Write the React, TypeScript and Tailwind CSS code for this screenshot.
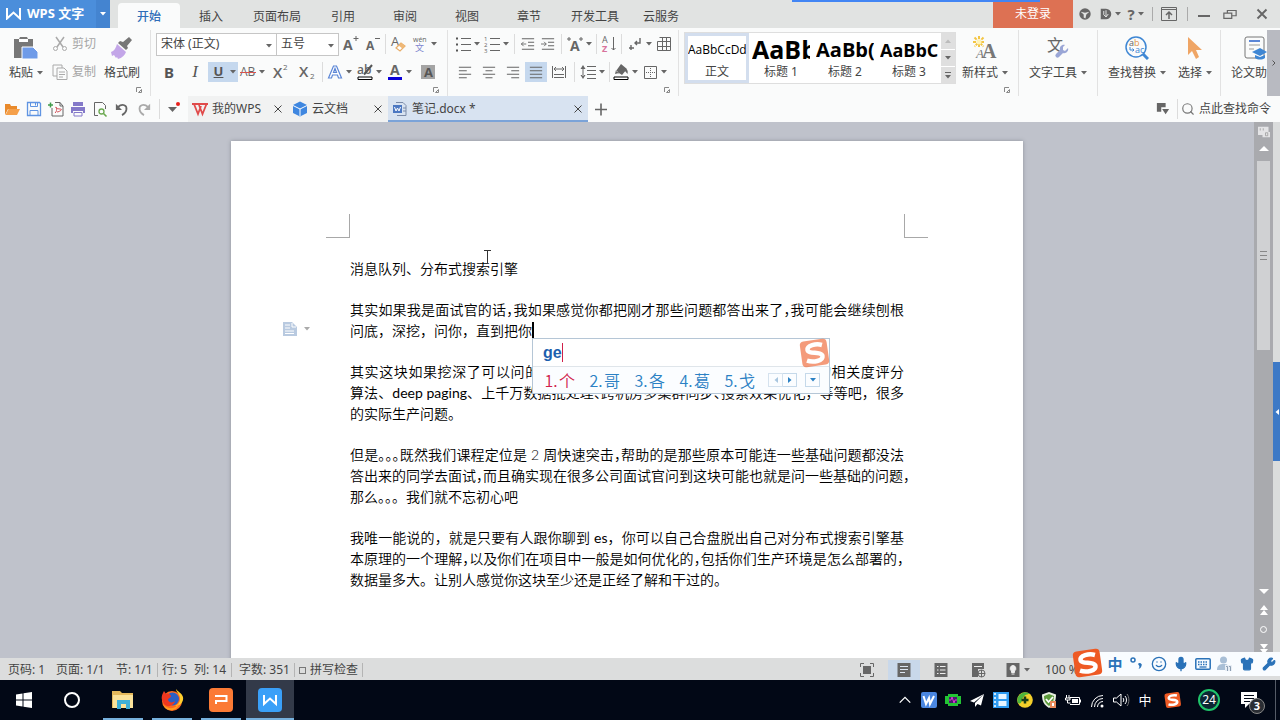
import type { ReactNode } from "react";
import clsx from "clsx";
import { Mic, Search, Shirt, Smile, Wrench } from "lucide-react";

const UI_FONT = "font-['Noto_Sans','Noto_Sans_CJK_SC',sans-serif]";
const GREY = "#666";

function Caret({ className = "text-[#666]" }: { className?: string }) {
  return (
    <svg viewBox="0 0 6 4" className={clsx("h-1 w-1.5 shrink-0", className)} aria-hidden="true">
      <path d="M0 0h6L3 3.5z" fill="currentColor" />
    </svg>
  );
}

function Sep({ className }: { className: string }) {
  return (
    <span className={clsx("flex shrink-0 justify-center", className)}>
      <span className="h-5 w-px bg-[#dcdcdc]" />
    </span>
  );
}

interface ToolProps {
  label: string;
  className: string;
  caret?: boolean;
  active?: boolean;
  children: ReactNode;
}

function Tool({ label, className, caret, active, children }: ToolProps) {
  return (
    <button
      aria-label={label}
      title={label}
      aria-pressed={active}
      className={clsx(
        "flex h-5 shrink-0 items-center justify-center gap-[3px]",
        className,
        active && "bg-[#c5d8ee]"
      )}
    >
      {children}
      {caret && <Caret />}
    </button>
  );
}

function Svg({ children, className = "size-4" }: { children: ReactNode; className?: string }) {
  return (
    <svg viewBox="0 0 16 16" fill="none" className={clsx("shrink-0 overflow-visible", className)} aria-hidden="true">
      {children}
    </svg>
  );
}

function Lines({ d, stroke = GREY, width = 1 }: { d: string; stroke?: string; width?: number }) {
  return <path d={d} stroke={stroke} strokeWidth={width} />;
}

function Glyph({
  x,
  y,
  size,
  fill = GREY,
  weight = 400,
  children,
}: {
  x: number;
  y: number;
  size: number;
  fill?: string;
  weight?: number;
  children: string;
}) {
  return (
    <text
      x={x}
      y={y}
      fontSize={size}
      fill={fill}
      fontWeight={weight}
      fontFamily="'Open Sans','Noto Sans CJK SC',sans-serif"
    >
      {children}
    </text>
  );
}

function Launcher({ label }: { label: string }) {
  return (
    <button aria-label={label} className="flex h-2 w-full items-center justify-end pr-2">
      <svg viewBox="0 0 6 6" className="size-1.5" fill="none" aria-hidden="true">
        <path d="M0.5 5V0.5H5M2.5 5.5h3v-3z" stroke="#888" />
      </svg>
    </button>
  );
}

function SogouLogo({ className }: { className: string }) {
  return (
    <svg viewBox="0 0 32 32" className={className} aria-hidden="true">
      <g transform="rotate(-8 16 16)">
        <rect x="2" y="3" width="27" height="26" rx="4" fill="#ee5a24" />
        <path
          d="M24 9C18 6.500 9 7.500 9 12s14 3 14 8-10 5.500-16 2.500"
          fill="none"
          stroke="#fff"
          strokeWidth="4.500"
        />
      </g>
    </svg>
  );
}

const MENU = ["开始", "插入", "页面布局", "引用", "审阅", "视图", "章节", "开发工具", "云服务"];

function TitleBar() {
  return (
    <header className="relative flex h-7 shrink-0 bg-[#e1e3e2] text-xs text-[#444]">
      <button className="flex w-24 items-center gap-1.5 bg-[#4b8edb] pl-1.5 text-[13px] font-bold text-white">
        <svg viewBox="0 0 15 12" className="h-3 w-[15px]" fill="none" aria-hidden="true">
          <path d="M1 0v10.500l6.500-6 6.500 6V0" stroke="#fff" strokeWidth="2" />
        </svg>
        WPS 文字
      </button>
      <button aria-label="应用菜单" className="flex w-3.5 items-center justify-center bg-[#4484d0]">
        <Caret className="text-white" />
      </button>
      <nav className="ml-2 flex pt-[3px]">
        {MENU.map((item, i) => (
          <button
            key={item}
            className={clsx(
              "min-w-[62px] px-[11px] pt-0.5",
              i === 0 && "rounded-t-sm bg-[#fafbfb] font-medium text-[#2f6db8]"
            )}
          >
            {item}
          </button>
        ))}
      </nav>
      <div className="ml-auto flex items-center">
        <button className="h-full w-20 bg-[#dd7153] text-white">未登录</button>
        <Tool label="皮肤" className="w-6">
          <Svg className="size-3.5">
            <circle cx="8" cy="8" r="6.500" fill={GREY} />
            <path d="M3 5.500l5 1 5-1-3.500 3-1 4.500-2-1 0-3.500z" fill="#e1e3e2" />
          </Svg>
        </Tool>
        <Tool label="云服务" className="w-[26px]" caret>
          <Svg className="size-3">
            <path d="M1 1h7a7 7 0 0 1 0 14H1z" fill={GREY} />
            <path d="M5 4v5l3 3 3-4M8 3v9" stroke="#e1e3e2" strokeWidth="1.300" />
          </Svg>
        </Tool>
        <Tool label="帮助" className="w-[25px]" caret>
          <span className="text-[15px] font-bold text-[#666]">?</span>
        </Tool>
        <span className="flex w-2 justify-center">
          <span className="h-3.5 w-px bg-[#aaa]" />
        </span>
        <Tool label="隐藏功能区" className="w-[26px]">
          <Svg>
            <path d="M0.5 1.500h15v13h-15zM0.5 3.500h15" stroke={GREY} />
            <path d="M8 13V6M5 9l3-3 3 3" stroke={GREY} strokeWidth="1.500" />
          </Svg>
        </Tool>
        <span className="flex w-2.5 justify-center">
          <span className="h-3.5 w-px bg-[#aaa]" />
        </span>
        <Tool label="最小化" className="w-6">
          <Svg>
            <Lines d="M2 10h12" width={2} />
          </Svg>
        </Tool>
        <Tool label="还原" className="w-7">
          <Svg className="size-3.5">
            <path d="M1 7h9v6H1zM5 7V4h10v6h-5" stroke={GREY} strokeWidth="1.400" />
          </Svg>
        </Tool>
        <Tool label="关闭" className="w-9">
          <Svg className="size-3">
            <Lines d="M2 2l12 12M14 2L2 14" width={2.5} />
          </Svg>
        </Tool>
      </div>
      <div className="absolute top-0 left-[792px] h-0.5 w-[248px] bg-[#4285f4]" />
    </header>
  );
}

function BigTool({
  label,
  className,
  caret = true,
  children,
}: {
  label: string;
  className: string;
  caret?: boolean;
  children: ReactNode;
}) {
  return (
    <button className={clsx("flex h-14 shrink-0 flex-col items-center pt-1", className)}>
      <span className="flex h-7 items-center">{children}</span>
      <span className="flex h-[22px] items-center gap-1 whitespace-nowrap">
        {label}
        {caret && <Caret />}
      </span>
    </button>
  );
}

function ClipboardGroup() {
  return (
    <section aria-label="剪贴板" className="w-[150px] shrink-0">
      <div className="flex">
        <BigTool label="粘贴" className="w-[52px]">
          <svg viewBox="0 0 24 24" className="size-6" aria-hidden="true">
            <path d="M0 3h5l1-2h7l1 2h5v19H0z" fill="#777" />
            <path d="M5 3h9v3H5z" fill="#fff" />
            <path d="M8 11h11l5 5v7H8z" fill="#6f9be8" stroke="#fff" />
          </svg>
        </BigTool>
        <div className="flex w-12 flex-col text-[#a5a5a5]">
          <button className="flex h-7 items-center gap-1 whitespace-nowrap">
            <Svg>
              <path d="M4 1l7 10M12 1L5 11" stroke="#aaa" strokeWidth="1.500" />
              <circle cx="3.500" cy="12.500" r="2" stroke="#aaa" />
              <circle cx="12.500" cy="12.500" r="2" stroke="#aaa" />
            </Svg>
            剪切
          </button>
          <button className="flex h-7 items-center gap-1 whitespace-nowrap">
            <Svg>
              <path d="M10 4V1H1v11h4M5 4h7l3 3v8.500H5zM7 8h6M7 10.500h6M7 13h4" stroke="#aaa" />
            </Svg>
            复制
          </button>
        </div>
        <BigTool label="格式刷" className="w-[44px]" caret={false}>
          <svg viewBox="0 0 24 24" className="size-6" aria-hidden="true">
            <path d="M19 1l3 3-5 6 1 2-2 2-8-7 2-2 3 1z" fill="#777" />
            <path d="M7 8l9 8c-1 3-4 6-8 7l-1-2-1 1-2-3-2 1-1-4c3-1 5-4 6-8z" fill="#c3a6e8" />
          </svg>
        </BigTool>
      </div>
      <Launcher label="剪贴板设置" />
    </section>
  );
}

function FontGroup() {
  return (
    <section aria-label="字体" className="w-[297px] shrink-0 border-l border-[#e2e2e2] pl-[5px]">
      <div className="flex h-7 items-center">
        <label className="relative flex h-[23px] w-[121px] border border-[#c6c6c6] bg-white">
          <select aria-label="字体" className="w-full appearance-none pl-1">
            <option>宋体 (正文)</option>
          </select>
          <Caret className="pointer-events-none absolute top-2.5 right-1 text-[#666]" />
        </label>
        <label className="relative flex h-[23px] w-[62px] border border-l-0 border-[#c6c6c6] bg-white">
          <select aria-label="字号" className="w-full appearance-none pl-1">
            <option>五号</option>
          </select>
          <Caret className="pointer-events-none absolute top-2.5 right-1 text-[#666]" />
        </label>
        <Tool label="增大字号" className="w-6">
          <Svg>
            <Glyph x={0} y={14} size={14} weight={700}>A</Glyph>
            <Lines d="M10.500 2.500h5M13 0v5" />
          </Svg>
        </Tool>
        <Tool label="减小字号" className="w-5">
          <Svg>
            <Glyph x={1} y={14} size={12} weight={700}>A</Glyph>
            <Lines d="M10 2.500h5" />
          </Svg>
        </Tool>
        <Sep className="w-1" />
        <Tool label="清除格式" className="w-[22px]">
          <Svg>
            <Glyph x={1} y={10} size={13}>A</Glyph>
            <path d="M6 12l5-5 4 3-5 5z" fill="#fff" stroke="#e8ae6a" strokeWidth="1.200" />
            <path d="M8.500 9.500L11 7l4 3-2.500 2.500z" fill="#efb877" />
          </Svg>
        </Tool>
        <Tool label="拼音指南" className="w-[31px]" caret>
          <Svg>
            <Glyph x={1} y={6} size={7}>wén</Glyph>
            <Glyph x={3} y={15} size={9} fill="#7f86cf">文</Glyph>
          </Svg>
        </Tool>
      </div>
      <div className="flex h-7 items-center">
        <Tool label="加粗" className="w-[26px]">
          <span className="text-[15px] font-bold text-[#555]">B</span>
        </Tool>
        <Tool label="倾斜" className="w-[26px]">
          <span className="font-['Liberation_Serif',serif] text-[17px] italic text-[#555]">I</span>
        </Tool>
        <Tool label="下划线" className="w-[30px]" caret active>
          <span className="w-4 text-center text-[13px] font-bold text-[#555] underline">U</span>
        </Tool>
        <Tool label="删除线" className="w-7" caret>
          <Svg>
            <Glyph x={0} y={12} size={12}>AB</Glyph>
            <Lines d="M0 8.500h16" stroke="#d9534f" />
          </Svg>
        </Tool>
        <Tool label="上标" className="w-7">
          <Svg>
            <Glyph x={1} y={14} size={15} weight={600}>X</Glyph>
            <Glyph x={11} y={6} size={8}>2</Glyph>
          </Svg>
        </Tool>
        <Tool label="下标" className="w-[26px]">
          <Svg>
            <Glyph x={0} y={13} size={15} weight={600}>X</Glyph>
            <Glyph x={11} y={15} size={8}>2</Glyph>
          </Svg>
        </Tool>
        <Sep className="w-1" />
        <Tool label="文字效果" className="w-[30px]" caret>
          <Svg>
            <path
              d="M1.500 14L6.500 2h3l5 12h-3l-1-3h-5l-1 3zM6.500 8.500h3L8 4.500z"
              fill="#fff"
              stroke="#5b86d6"
              strokeWidth="1.200"
            />
          </Svg>
        </Tool>
        <Tool label="突出显示" className="w-[30px]" caret>
          <Svg>
            <Glyph x={0} y={10} size={12} weight={600}>ab</Glyph>
            <Lines d="M15 1L7 10.500" stroke="#555" width={2} />
            <path d="M1 13h14v2.500H1z" fill="#fff" stroke="#000" />
          </Svg>
        </Tool>
        <Tool label="字体颜色" className="w-[30px]" caret>
          <Svg>
            <Glyph x={3} y={11} size={14} weight={700}>A</Glyph>
            <path d="M1 13h14v3H1z" fill="#0a00d8" />
          </Svg>
        </Tool>
        <Tool label="字符底纹" className="w-7">
          <Svg>
            <path d="M1 1h14v14H1z" fill="#a4a4a4" />
            <Glyph x={4} y={13} size={13} weight={700} fill="#555">A</Glyph>
          </Svg>
        </Tool>
      </div>
      <Launcher label="字体设置" />
    </section>
  );
}

function ParagraphGroup() {
  return (
    <section aria-label="段落" className="w-[231px] shrink-0 border-l border-[#e2e2e2] pl-[5px]">
      <div className="flex h-7 items-center">
        <Tool label="项目符号" className="w-[29px]" caret>
          <Svg>
            <Lines d="M6 2.500h10M6 8.500h10M6 14.500h10" />
            <path d="M1 1.500h2v2H1zM1 7.500h2v2H1zM1 13.500h2v2H1z" fill="#555" />
          </Svg>
        </Tool>
        <Tool label="编号" className="w-[29px]" caret>
          <Svg>
            <Lines d="M6 2.500h10M6 8.500h10M6 14.500h10" />
            <Glyph x={0} y={5} size={6}>1</Glyph>
            <Glyph x={0} y={11} size={6}>2</Glyph>
            <Glyph x={0} y={17} size={6}>3</Glyph>
          </Svg>
        </Tool>
        <Sep className="w-[7px]" />
        <Tool label="减少缩进" className="w-5">
          <Svg className="size-3.5">
            <Lines d="M1 2h14M8 6h7M8 10h7M1 14h14" width={1.2} />
            <Lines d="M0 8h6M3 5.500L0.5 8 3 10.500" />
          </Svg>
        </Tool>
        <Tool label="增加缩进" className="w-5">
          <Svg className="size-3.5">
            <Lines d="M1 2h14M8 6h7M8 10h7M1 14h14" width={1.2} />
            <Lines d="M0 8h6M3.500 5.500L6 8l-2.500 2.500" />
          </Svg>
        </Tool>
        <Sep className="w-[7px]" />
        <Tool label="中文版式" className="w-[29px]" caret>
          <Svg>
            <Glyph x={3} y={15} size={14} weight={700}>A</Glyph>
            <Lines d="M0 3h4M2 1v4M12 3h4M14 1v4" />
          </Svg>
        </Tool>
        <Sep className="w-1" />
        <Tool label="排序" className="w-5">
          <Svg>
            <Glyph x={2} y={7} size={9}>A</Glyph>
            <Glyph x={2} y={16} size={9} weight={700} fill="#d8739b">Z</Glyph>
            <Lines d="M13.500 1v13M11.500 12l2 2 2-2" />
          </Svg>
        </Tool>
        <Sep className="w-[7px]" />
        <Tool label="显示段落标记" className="w-[29px]" caret>
          <Svg>
            <Lines d="M13 2v5H8M10 5L8 7l2 2M4 9v5M2 12h5" width={1.4} />
          </Svg>
        </Tool>
        <Tool label="插入表格" className="w-5">
          <Svg>
            <Lines d="M3.500 1.500h11v13H1.500v-9h13M6.500 1.500v13M10.500 1.500v13M1.500 10.500h13" />
          </Svg>
        </Tool>
      </div>
      <div className="flex h-7 items-center">
        <Tool label="左对齐" className="w-6">
          <Svg className="size-3.5">
            <Lines d="M1 2.500h14M1 6.500h9M1 10.500h14M1 14.500h9" width={1.2} />
          </Svg>
        </Tool>
        <Tool label="居中对齐" className="w-6">
          <Svg className="size-3.5">
            <Lines d="M1 2.500h14M4 6.500h8M1 10.500h14M4 14.500h8" width={1.2} />
          </Svg>
        </Tool>
        <Tool label="右对齐" className="w-6">
          <Svg className="size-3.5">
            <Lines d="M1 2.500h14M6 6.500h9M1 10.500h14M6 14.500h9" width={1.2} />
          </Svg>
        </Tool>
        <Tool label="两端对齐" className="w-[22px]" active>
          <Svg className="size-3.5">
            <Lines d="M1 2.500h14M1 6.500h14M1 10.500h14M1 14.500h14" width={1.2} />
          </Svg>
        </Tool>
        <Tool label="分散对齐" className="w-6">
          <Svg>
            <Lines d="M1.500 2v12M14.500 2v12M3 5h10M5 3L3 5l2 2M11 3l2 2-2 2M3 10.500h10M3 13.500h10" />
          </Svg>
        </Tool>
        <Sep className="w-[7px]" />
        <Tool label="行距" className="w-[29px]" caret>
          <Svg>
            <Lines d="M7 2.500h9M7 6.500h9M7 10.500h9M7 14.500h9" />
            <path d="M3 1l2.500 4h-5zM3 15l2.500-4h-5zM2.500 4h1v8h-1z" fill={GREY} />
          </Svg>
        </Tool>
        <Sep className="w-1" />
        <Tool label="底纹颜色" className="w-[29px]" caret>
          <Svg>
            <path d="M8 0l6 5-5 6-6-4zM3 6l-1 4 4-1zM12 5c3 0 3 3 2.500 5L12 7z" fill={GREY} />
            <path d="M1 13h14v2.500H1z" fill="#fff" stroke="#000" />
          </Svg>
        </Tool>
        <Tool label="边框" className="w-[29px]" caret>
          <Svg>
            <path d="M2.500 2.500h12v12h-12z" stroke={GREY} />
            <path d="M8.500 4v10M4 8.500h10" stroke={GREY} strokeDasharray="1 1" />
          </Svg>
        </Tool>
      </div>
      <Launcher label="段落设置" />
    </section>
  );
}

const STYLES = [
  { name: "正文", sample: "AaBbCcDd", cls: "text-xs" },
  { name: "标题 1", sample: "AaBb", cls: "text-[25px] font-bold" },
  { name: "标题 2", sample: "AaBb(", cls: "text-[20px] font-bold" },
  { name: "标题 3", sample: "AaBbC", cls: "text-[18px] font-bold" },
];

function StylesGroup() {
  return (
    <section aria-label="样式" className="w-[340px] shrink-0 border-l border-[#e2e2e2] pl-[5px]">
      <div className="flex h-14 pt-0.5">
        <div className="flex h-[52px] border border-[#dedede] bg-white">
          {STYLES.map((s, i) => (
            <button
              key={s.name}
              className={clsx(
                "flex w-16 flex-col items-center text-black",
                i === 0 ? "border-[3px] border-[#d3deee]" : "px-[3px] pt-[3px]"
              )}
            >
              <span
                className={clsx(
                  "flex h-7 w-full items-center overflow-hidden whitespace-nowrap font-['Open_Sans',sans-serif]",
                  s.cls
                )}
              >
                {s.sample}
              </span>
              <span className="leading-4 text-[#444]">{s.name}</span>
            </button>
          ))}
          <div className="flex w-3.5 flex-col bg-[#dfdfdf]">
            <button aria-label="上一行" className="flex flex-1 items-center justify-center border-b border-white">
              <Caret className="rotate-180 text-[#bbb]" />
            </button>
            <button aria-label="下一行" className="flex flex-1 items-center justify-center border-b border-white">
              <Caret />
            </button>
            <button aria-label="更多样式" className="flex flex-1 flex-col items-center justify-center gap-0.5">
              <span className="h-px w-1.5 bg-[#666]" />
              <Caret />
            </button>
          </div>
        </div>
        <button className="flex w-[58px] flex-col items-center pt-0.5">
          <svg viewBox="0 0 24 24" className="mt-0.5 size-6" aria-hidden="true">
            <text x="9" y="22" fontSize="20" fontWeight="700" fill="#777" fontFamily="'Liberation Serif',serif">
              A
            </text>
            <text x="3" y="22" fontSize="13" fontStyle="italic" fill="#777" fontFamily="'Liberation Serif',serif">
              A
            </text>
            <path
              d="M6 0v12M0 6h12M1.500 1.500l9 9M10.500 1.500l-9 9"
              stroke="#f3c544"
              strokeWidth="2"
              strokeDasharray="3 1"
            />
            <circle cx="6" cy="6" r="2.500" fill="#fff3b8" />
          </svg>
          <span className="mt-0.5 flex h-[22px] items-center gap-1 whitespace-nowrap">
            新样式
            <Caret />
          </span>
        </button>
      </div>
      <Launcher label="样式设置" />
    </section>
  );
}

function Ribbon() {
  return (
    <div className="flex h-[68px] shrink-0 overflow-hidden bg-[#fafbfb] pt-0.5 text-xs text-[#444]">
      <ClipboardGroup />
      <FontGroup />
      <ParagraphGroup />
      <StylesGroup />
      <section aria-label="工具" className="w-[79px] shrink-0 border-l border-[#e2e2e2]">
        <BigTool label="文字工具" className="w-full">
          <svg viewBox="0 0 24 24" className="size-6 overflow-visible" aria-hidden="true">
            <text x="1" y="15" fontSize="16" fill="#666" fontFamily="'Noto Sans CJK SC',sans-serif">
              文
            </text>
            <path
              d="M22 12l-3 3-2-1 0-3 2-2c-3-1-6 2-5 5l-4 4a2 2 0 0 0 3 3l4-4c3 1 6-2 5-5z"
              fill="#9aa6d6"
            />
          </svg>
        </BigTool>
      </section>
      <section aria-label="编辑" className="flex w-[123px] shrink-0 border-l border-[#e2e2e2] pl-1.5">
        <BigTool label="查找替换" className="w-[66px]">
          <svg viewBox="0 0 24 24" className="size-6" fill="none" aria-hidden="true">
            <circle cx="11" cy="11" r="10" stroke="#3f87d4" strokeWidth="1.500" />
            <path d="M18 18l5 5" stroke="#3f87d4" strokeWidth="3" />
            <Glyph x={4} y={10} size={9}>a</Glyph>
            <Glyph x={9} y={10} size={9} fill="#e39347">b</Glyph>
            <Glyph x={10} y={17} size={9} fill="#3f87d4">ac</Glyph>
            <path d="M5 11v3h4M7.500 12.500L9 14l-1.500 1.500" stroke="#3f87d4" />
          </svg>
        </BigTool>
        <BigTool label="选择" className="w-[50px]">
          <svg viewBox="0 0 24 24" className="size-6" aria-hidden="true">
            <path d="M5 1v18l4-4 4 8 3-2-3-7h6z" fill="#efa565" />
          </svg>
        </BigTool>
      </section>
      <section aria-label="论文" className="flex min-w-0 flex-1 overflow-hidden border-l border-[#e2e2e2]">
        <BigTool label="论文助手" className="ml-2.5 w-12" caret={false}>
          <svg viewBox="0 0 24 24" className="size-6" fill="none" aria-hidden="true">
            <rect x="2" y="1" width="19" height="21" rx="2" stroke="#777" />
            <path d="M6 5h11" stroke="#5b86d6" strokeWidth="2" />
            <path d="M6 9h11M6 13h5" stroke="#999" />
            <path d="M9 16l8-4 7 4-7 4z" fill="#3f87d4" />
            <path d="M12 19v3c3 2 7 2 10 0v-3l-5 2z" fill="#3f87d4" />
          </svg>
        </BigTool>
      </section>
      <button aria-label="更多功能" className="flex w-[13px] shrink-0 items-center justify-center bg-[#b8bac1]">
        <svg viewBox="0 0 4 6" className="h-1.5 w-1" fill="none" aria-hidden="true">
          <path d="M0.5 0.5L3 3 0.5 5.500" stroke="#555" />
        </svg>
      </button>
    </div>
  );
}

function CloseX() {
  return (
    <svg viewBox="0 0 8 8" className="size-2" fill="none" aria-hidden="true">
      <path d="M0.5 0.5l7 7M7.500 0.5l-7 7" stroke="#444" />
    </svg>
  );
}

function DocTab({
  title,
  active,
  icon,
}: {
  title: string;
  active?: boolean;
  icon: ReactNode;
}) {
  return (
    <div
      className={clsx(
        "flex items-center border-b-2 pt-0.5 pr-1.5 pl-1",
        active ? "w-[200px] border-[#7ba3d8] bg-[#d8e3f1]" : "w-[100px] border-[#f1f2f2] bg-[#f1f2f2]"
      )}
    >
      <button className="flex flex-1 items-center gap-1 whitespace-nowrap">
        {icon}
        {title}
      </button>
      <button aria-label={`关闭 ${title}`}>
        <CloseX />
      </button>
    </div>
  );
}

function TabBar() {
  return (
    <div className="flex h-[26px] shrink-0 bg-[#fafbfb] text-xs text-[#444]">
      <div className="flex w-[188px] items-center pl-px">
        <Tool label="打开" className="w-[22px]">
          <Svg>
            <path d="M1 3h5l1 2h6v3H4l-3 6z" fill="#e98a2b" />
            <path d="M4.500 8H16l-3 6H1.500z" fill="#f5a04a" />
          </Svg>
        </Tool>
        <Tool label="保存" className="w-[22px]">
          <Svg>
            <path d="M1.500 1.500h12l1 1v12h-13z" stroke="#5f94e2" strokeWidth="1.300" />
            <path d="M4.500 1.500v4h7v-4M4 14.500v-5h8v5M9.500 2v2.500" stroke="#5f94e2" />
          </Svg>
        </Tool>
        <Tool label="输出为PDF" className="w-[22px]">
          <Svg>
            <path d="M4 7v8h11V5l-3-3.500H7M12 1.500V5h3" stroke={GREY} />
            <path d="M7 12c2-1 2-6 1-6s0 2 4 2-1 3-3 3" stroke="#d4545c" />
            <path d="M0 4h5M2.500 1.500v5" stroke="#3f9a4a" strokeWidth="1.500" />
          </Svg>
        </Tool>
        <Tool label="打印" className="w-[22px]">
          <Svg>
            <path d="M3 1h10v4H3zM1 6h14v6h-2v-2H3v2H1z" fill="#8479c9" />
            <path d="M4 11.500h8v3.500H4z" stroke="#8479c9" />
          </Svg>
        </Tool>
        <Tool label="打印预览" className="w-[22px]">
          <Svg>
            <path d="M6 14.500H2.500v-13h8l3 3V8" stroke={GREY} />
            <circle cx="9.500" cy="10.500" r="2.500" stroke="#6aa84f" strokeWidth="1.300" />
            <Lines d="M11.500 12.500l3 3" stroke="#6aa84f" width={1.6} />
          </Svg>
        </Tool>
        <Tool label="撤消" className="w-[22px]">
          <Svg className="size-3.5">
            <path d="M3 6c6-5 11-2 10 3-.5 3-3 5-5 6" stroke={GREY} strokeWidth="2" />
            <path d="M1 2v7h7z" fill={GREY} />
          </Svg>
        </Tool>
        <Tool label="恢复" className="w-[22px]">
          <Svg className="size-3.5">
            <path d="M13 6C7 1 2 4 3 9c.5 3 3 5 5 6" stroke="#aaa" strokeWidth="2" />
            <path d="M15 2v7H8z" fill="#aaa" />
          </Svg>
        </Tool>
        <Sep className="w-2" />
        <Tool label="自定义快速访问工具栏" className="w-5">
          <Svg>
            <path d="M3 6h9l-4.500 5z" fill={GREY} />
            <circle cx="13" cy="3" r="2" fill="#e8201c" />
          </Svg>
        </Tool>
      </div>
      <DocTab
        title="我的WPS"
        icon={
          <Svg>
            <path d="M0 3h8M8 3h8M2 3l4 10 3-8M7 4l3.500 9L14.500 3" stroke="#e04a4a" strokeWidth="1.800" />
          </Svg>
        }
      />
      <DocTab
        title="云文档"
        icon={
          <Svg>
            <path d="M8 0.5l7 3.500v8l-7 3.500L1 12V4z" fill="#3f87e0" />
            <path d="M1 4.500L8 8l7-3.500M8 8v7" stroke="#fff" />
          </Svg>
        }
      />
      <DocTab
        title="笔记.docx *"
        active
        icon={
          <Svg>
            <path d="M4 1.500h7l3 3v10H5M11 7h3M11 10h3" stroke="#7b8ba8" />
            <path d="M1 4h9v8H1z" fill="#4c78c2" />
            <path d="M2.500 6l1.500 4 1.500-3L7 10l1.500-4" stroke="#fff" />
          </Svg>
        }
      />
      <Tool label="新建" className="mt-[3px] w-[26px]">
        <Svg>
          <Lines d="M2 8.500h12M8 2.500v12" width={1.6} />
        </Svg>
      </Tool>
      <div className="ml-auto flex items-center pr-2">
        <Tool label="窗口列表" className="w-5">
          <Svg className="size-3.5">
            <path d="M1 1h10v5H6v5H1z" fill={GREY} />
            <path d="M7 8h8l-4 6z" fill={GREY} />
          </Svg>
        </Tool>
        <Sep className="w-2" />
        <label className="flex items-center gap-1">
          <Search className="size-3.5 text-[#777]" />
          <input
            aria-label="查找命令"
            placeholder="点此查找命令"
            className="w-[73px] bg-transparent placeholder:text-[#444]"
          />
        </label>
      </div>
    </div>
  );
}

// Full-width punctuation set to half its width, as the typesetter compresses it.
function Half({ children }: { children: string }) {
  return <span className="[font-feature-settings:'halt']">{children}</span>;
}

function Line({ full, children }: { full?: boolean; children: ReactNode }) {
  return (
    <span className={clsx("block whitespace-nowrap", full && "[text-align-last:justify]")}>
      {children}
    </span>
  );
}

const CANDIDATES = ["个", "哥", "各", "葛", "戈"];

function ImePopup() {
  return (
    <div className="absolute top-4 left-0 z-10 w-[298px] border border-[#b5c6d6] bg-white leading-none">
      <div className="flex h-[27px] items-center pl-2.5">
        <span className="font-['Liberation_Sans',sans-serif] text-[16px] font-bold text-[#1c5fae]">
          ge
        </span>
        <span className="h-[19px] w-px bg-[#d0204a]" />
      </div>
      <div className="flex h-[27px] items-center border-t border-[#dfe5ea] bg-[#fbfdff] pl-2.5 font-['Noto_Sans_CJK_SC',sans-serif] font-[350]">
        {CANDIDATES.map((c, i) => (
          <button
            key={c}
            className={clsx(
              "flex w-[45px] items-center whitespace-nowrap text-[16px]",
              i === 0 ? "text-[#d0204a]" : "text-[#2b81c4]"
            )}
          >
            <span className="w-4">{i + 1}.</span>
            <span>{c}</span>
          </button>
        ))}
        <button aria-label="上一页" className="flex h-3.5 w-[15px] items-center justify-center border border-[#d5e2ee]">
          <Caret className="rotate-90 text-[#a9c6df]" />
        </button>
        <button aria-label="下一页" className="flex h-3.5 w-3.5 items-center justify-center border border-l-0 border-[#c5d9ea]">
          <Caret className="-rotate-90 text-[#2b81c4]" />
        </button>
        <button aria-label="更多候选" className="ml-2 flex h-3.5 w-[15px] items-center justify-center border border-[#c5d9ea]">
          <Caret className="text-[#2b81c4]" />
        </button>
      </div>
      <SogouLogo className="absolute -top-0.5 -right-0.5 size-8 opacity-60" />
    </div>
  );
}

function Page() {
  return (
    <article className="relative mx-auto mt-[19px] h-[1122px] w-[792px] bg-white font-['Lato','Noto_Sans_CJK_SC',sans-serif] text-[14px] leading-[21px] font-[350] text-black shadow-[0_0_4px_#8e919b]">
      <div className="flex justify-between px-[95px] pt-[73px]">
        <span className="size-6 border-r border-b border-[#a8a8a8]" />
        <span className="size-6 border-b border-l border-[#a8a8a8]" />
      </div>
      <div className="flex flex-col gap-5 px-[119px] pt-5">
        <p>
          <Line>消息队列、分布式搜索引擎</Line>
        </p>
        <p>
          <Line full>
            其实如果我是面试官的话<Half>，</Half>我如果感觉你都把刚才那些问题都答出来了<Half>，</Half>
            我可能会继续刨根
          </Line>
          <Line>
            问底，深挖，问你，直到把你
            <span className="relative">
              <span className="absolute top-0 left-0 h-[18px] w-0.5 bg-black" />
              <ImePopup />
            </span>
          </Line>
        </p>
        <p>
          <Line full>其实这块如果挖深了可以问的东西也非常多，比如搜索的底层原理、搜索的相关度评分</Line>
          <Line full>
            算法、<span className="font-normal">deep paging</span>、上千万数据批处理<Half>、</Half>
            跨机房多集群同步<Half>、</Half>搜索效果优化，等等吧，很多
          </Line>
          <Line>的实际生产问题。</Line>
        </p>
        <p>
          <Line full>
            但是<Half>。。。</Half>既然我们课程定位是 2 周快速突击<Half>，</Half>
            帮助的是那些原本可能连一些基础问题都没法
          </Line>
          <Line>
            答出来的同学去面试<Half>，</Half>而且确实现在很多公司面试官问到这块可能也就是问一些基础的问题
            <Half>，</Half>
          </Line>
          <Line>
            那么<Half>。。</Half>。我们就不忘初心吧
          </Line>
        </p>
        <p>
          <Line full>
            我唯一能说的，就是只要有人跟你聊到 <span className="font-normal">es</span>
            ，你可以自己合盘脱出自己对分布式搜索引擎基
          </Line>
          <Line full>
            本原理的一个理解<Half>，</Half>以及你们在项目中一般是如何优化的<Half>，</Half>
            包括你们生产环境是怎么部署的<Half>，</Half>
          </Line>
          <Line>数据量多大。让别人感觉你这块至少还是正经了解和干过的。</Line>
        </p>
      </div>
      <button aria-label="段落布局" className="absolute top-[180px] left-[51px] flex items-center gap-1.5">
        <Svg>
          <path d="M1 1h9l5 5v9H1z" fill="#b9cae0" />
          <path d="M3 4h5M3 7h5M3 10h9M3 12.500h9M10 2v4h4" stroke="#fff" />
        </Svg>
        <Caret className="text-[#aaa]" />
      </button>
      <svg viewBox="0 0 7 14" className="absolute top-[109px] left-[253px] h-3.5 w-[7px]" fill="none" aria-hidden="true">
        <path d="M0 0.5h7M3.500 0v14M0 13.500h3" stroke="#333" />
      </svg>
    </article>
  );
}

function ScrollBar() {
  return (
    <div className="flex w-[19px] shrink-0 flex-col items-center bg-[#a9aaae] text-white">
      <Svg className="mt-1 size-3">
        <path d="M0 1h14v7h2v7H6v-3H0z" fill="#e4e4e6" />
        <path d="M3 3v3M7 3v3M10 9v4h3V9z" stroke="#999" />
      </Svg>
      <svg viewBox="0 0 10 5" className="mt-2 h-[5px] w-2.5" aria-hidden="true">
        <path d="M5 0l5 5H0z" fill="#fff" />
      </svg>
      <div className="mt-2.5 flex h-[189px] w-[13px] flex-col items-center justify-center gap-[3px] bg-[#d0d1d3]">
        <span className="h-px w-[7px] bg-[#888]" />
        <span className="h-px w-[7px] bg-[#888]" />
        <span className="h-px w-[7px] bg-[#888]" />
      </div>
      <div className="mt-auto flex flex-col items-center gap-[11px] pb-1">
        <svg viewBox="0 0 10 5" className="h-[5px] w-2.5" aria-hidden="true">
          <path d="M0 0h10L5 5z" fill="#fff" />
        </svg>
        <svg viewBox="0 0 8 10" className="h-2.5 w-2" aria-hidden="true">
          <path d="M4 0l4 5H0zM4 5l4 5H0z" fill="#fff" />
        </svg>
        <span className="size-[7px] rounded-full border border-white" />
        <svg viewBox="0 0 8 10" className="h-2.5 w-2" aria-hidden="true">
          <path d="M0 0h8L4 5zM0 5h8l-4 5z" fill="#fff" />
        </svg>
      </div>
    </div>
  );
}

function Divider() {
  return <span className="h-3.5 w-px bg-[#b4b4b4]" />;
}

function StatusBar() {
  return (
    <footer className="relative flex h-[22px] shrink-0 items-center bg-[#dcdddd] pt-0.5 pl-2 text-xs whitespace-nowrap text-[#444]">
      <span className="w-12">页码: 1</span>
      <span className="w-[60px]">页面: 1/1</span>
      <span className="w-[41px]">节: 1/1</span>
      <Divider />
      <span className="w-9 pl-1">行: 5</span>
      <span className="w-[37px]">列: 14</span>
      <Divider />
      <span className="w-[62px] pl-[7px]">字数: 351</span>
      <Divider />
      <label className="flex items-center gap-1 px-1">
        <input type="checkbox" className="size-[7px] appearance-none border border-[#777]" />
        拼写检查
      </label>
      <Divider />
      <div className="ml-auto flex h-full w-[429px] items-center">
        <Tool label="全屏显示" className="w-8">
          <Svg>
            <path d="M1.500 5V1.500H5M11 1.500h3.500V5M14.500 11v3.500H11M5 14.500H1.500V11" stroke="#666" />
            <path d="M4 4h8v8H4z" fill="#666" />
          </Svg>
        </Tool>
        <button aria-label="页面视图" aria-pressed="true" className="ml-[5px] flex h-full w-8 items-center justify-center bg-[#c9d8ea]">
          <Svg>
            <path d="M1.500 1h13v14h-13z" fill="#666" />
            <path d="M4 4.500h8M4 7.500h8M4 10.500h5" stroke="#dde6f2" />
          </Svg>
        </button>
        <Tool label="大纲视图" className="ml-[5px] w-8">
          <Svg>
            <path d="M1.500 1h13v14h-13z" fill="#666" />
            <path d="M4 4.500h1.500M7 4.500h5.500M4 8h1.500M7 8h5.500M4 11.500h1.500M7 11.500h5.500" stroke="#eee" />
          </Svg>
        </Tool>
        <Tool label="Web版式" className="ml-[5px] w-8">
          <Svg>
            <path d="M2 1h12v6H8v8H2z" fill="#666" />
            <path d="M4 4.500h8" stroke="#eee" />
            <circle cx="11.500" cy="11.500" r="3.500" stroke="#666" />
            <path d="M8 11.500h7M11.500 8v7" stroke="#666" />
          </Svg>
        </Tool>
        <Tool label="护眼模式" className="ml-[5px] w-9" caret>
          <Svg>
            <path d="M1.500 1h13v14h-13z" fill="#666" />
            <path d="M8 3.500a3 3 0 0 1 1.500 5.500v1.500h-3V9A3 3 0 0 1 8 3.500zM6.500 12h3" fill="#eee" stroke="#eee" />
          </Svg>
        </Tool>
        <span className="ml-2.5">100 %</span>
      </div>
      <SogouBar />
    </footer>
  );
}

function SogouBar() {
  return (
    <div className="absolute right-0 bottom-1 flex h-6 w-[190px] items-center bg-[#f9fcff] pl-3.5 text-[#2a72b8]">
      <SogouLogo className="absolute -top-[5px] -left-[18px] size-8" />
      <button className="w-[22px] text-center text-[15px] font-bold">中</button>
      <button aria-label="中文标点" className="flex w-[22px] justify-center">
        <Svg>
          <circle cx="4" cy="4" r="2" stroke="currentColor" strokeWidth="1.500" />
          <path d="M9 8a2 2 0 1 1 3.500 2c-.5 1.500-1.500 2.500-3 3 .8-1 1-2 .8-3z" fill="currentColor" />
        </Svg>
      </button>
      <button aria-label="表情" className="flex w-[22px] justify-center">
        <Smile className="size-4" />
      </button>
      <button aria-label="语音" className="flex w-[22px] justify-center">
        <Mic className="size-4 fill-current" />
      </button>
      <button aria-label="软键盘" className="flex w-[22px] justify-center">
        <Svg>
          <rect x="0.800" y="2.800" width="14.400" height="10.400" rx="1" stroke="currentColor" strokeWidth="1.500" />
          <path d="M3 6h10M3 8.500h10" stroke="currentColor" strokeWidth="1.500" strokeDasharray="1.500 1" />
          <path d="M4.500 11h7" stroke="currentColor" strokeWidth="1.300" />
        </Svg>
      </button>
      <button aria-label="个人中心" className="flex w-[22px] justify-center">
        <Svg>
          <circle cx="6.500" cy="4" r="3.500" fill="#a9bfd6" />
          <path d="M0 14c0-5 3-6 6.500-6s4 1 4 1v5z" fill="#a9bfd6" />
          <path d="M8 9h7v6H8z" fill="#e8eef5" />
          <path d="M9 10.500h1.500V15M12 10.500h1.500V15" stroke="#8d9fb4" />
        </Svg>
      </button>
      <button aria-label="皮肤" className="flex w-[22px] justify-center">
        <Shirt className="size-3.5 fill-current" />
      </button>
      <button aria-label="工具箱" className="flex w-[22px] justify-center">
        <Wrench className="size-3.5 fill-current" />
      </button>
    </div>
  );
}

function TaskButton({
  label,
  active,
  running,
  children,
}: {
  label: string;
  active?: boolean;
  running?: boolean;
  children: ReactNode;
}) {
  return (
    <button
      aria-label={label}
      className={clsx("flex w-12 flex-col items-center justify-between", active && "bg-[#333a49]")}
    >
      <span className="h-0.5" />
      {children}
      <span className={clsx("h-0.5", active ? "w-full" : "w-10", running && "bg-[#76b0dd]")} />
    </button>
  );
}

function Tray({ label, className = "w-6", children }: { label: string; className?: string; children: ReactNode }) {
  return (
    <button aria-label={label} className={clsx("flex shrink-0 items-center justify-center", className)}>
      {children}
    </button>
  );
}

function TaskBar() {
  return (
    <div className="flex h-10 shrink-0 bg-[#020816] text-white">
      <TaskButton label="开始菜单">
        <Svg>
          <path d="M0 2.500l6.500-1v6H0zM7.500 1.300L16 0v7.500H7.500zM0 8.500h6.500v6l-6.500-1zM7.500 8.500H16V16l-8.500-1.300z" fill="#fff" />
        </Svg>
      </TaskButton>
      <TaskButton label="Cortana">
        <span className="size-4 rounded-full border-2 border-white" />
      </TaskButton>
      <div className="ml-[3px] flex gap-px">
        <TaskButton label="文件资源管理器" running>
          <svg viewBox="0 0 22 20" className="h-5 w-[22px]" aria-hidden="true">
            <path d="M0 1h8l2 2h11v15H0z" fill="#e5b95c" />
            <path d="M1 5h20v13H1z" fill="#fbe29a" />
            <path d="M5 10h13v9h-4v-5H9v5H5z" fill="#3fb0d8" />
          </svg>
        </TaskButton>
        <TaskButton label="Firefox" running>
          <svg viewBox="0 0 24 24" className="size-6" aria-hidden="true">
            <circle cx="12" cy="13" r="10" fill="#ff6a1f" />
            <circle cx="12.500" cy="11" r="6.500" fill="#2b5fc4" />
            <path d="M2 12C1 8 3 5 4 3l2 3c2-1 4 0 5 2 0 2-3 2-3 4 1 3 5 3 7 1-1 5-8 7-11 3z" fill="#f0371f" />
            <path d="M16 1c0 3 4 5 4 10 0 4-3 6-5 7 5 0 9-4 8-9-1-4-5-5-7-8z" fill="#ffcf2e" />
            <path d="M3 16c3 5 11 6 16 0-1 5-6 7-10 6-3-.5-5-3-6-6z" fill="#ff9d1f" />
          </svg>
        </TaskButton>
        <TaskButton label="WPS 演示" running>
          <svg viewBox="0 0 24 24" className="size-6" fill="none" aria-hidden="true">
            <rect width="24" height="24" rx="4" fill="#fb7a35" />
            <path d="M6 8h11.500v5H7v3" stroke="#fff" strokeWidth="2" />
          </svg>
        </TaskButton>
        <TaskButton label="WPS 文字" running active>
          <svg viewBox="0 0 24 24" className="size-6" fill="none" aria-hidden="true">
            <rect width="24" height="24" rx="4" fill="#3aa0f8" />
            <path d="M6 7v9l6-5.500 6 5.500V7" stroke="#fff" strokeWidth="2" />
          </svg>
        </TaskButton>
      </div>
      <div className="ml-auto flex pr-1">
        <Tray label="显示隐藏的图标">
          <Svg className="size-3.5">
            <Lines d="M2 11l6-6 6 6" stroke="#fff" width={1.5} />
          </Svg>
        </Tray>
        <Tray label="WPS 云">
          <Svg>
            <rect width="16" height="16" rx="2" fill="#4a86e0" />
            <path d="M2.500 4l2.500 8 3-6 1 6 4-8" stroke="#fff" strokeWidth="2" />
          </Svg>
        </Tray>
        <Tray label="声卡管理">
          <Svg>
            <path d="M0 4h16v8H0zM3 2h10v12H3z" fill="#23c434" />
            <path d="M4 5h8v6H4z" fill="#4a1a6e" />
            <path d="M4 8h2l1-3 2 6 1-3h2" stroke="#d63ad0" />
          </Svg>
        </Tray>
        <Tray label="消息">
          <Svg>
            <path d="M15 2L1 9l4 1.500zM15 2L6 11v4l2.500-3 3.500 1.500z" fill="#fff" />
          </Svg>
        </Tray>
        <Tray label="录屏">
          <Svg>
            <path d="M0 0h16v16H0z" fill="#2f9bf0" />
            <path d="M5.500 2h8v5h-8zM5.500 9h8v5h-8z" fill="#e9f5ff" />
            <path d="M2 1v14" stroke="#fff" strokeWidth="1.500" strokeDasharray="2 2" />
          </Svg>
        </Tray>
        <Tray label="安全卫士">
          <Svg>
            <circle cx="8" cy="8" r="7.800" fill="#f3cf2b" />
            <path d="M1 11A7.800 7.800 0 0 1 13 2C9 2 6 4 5 8s-2 4-4 3z" fill="#4cb53c" />
            <path d="M8 4.500v7M4.500 8h7" stroke="#173d16" strokeWidth="2.500" />
          </Svg>
        </Tray>
        <Tray label="安全防护">
          <Svg>
            <path d="M8 0l7 2.500c0 7-2 10.500-7 13.500C3 13 1 9.500 1 2.500z" fill="#e8efe0" />
            <path d="M8 2l5 2c0 5-1.500 7.500-5 10-3.500-2.500-5-5-5-10z" fill="#5d9c3c" />
            <path d="M5 7l2.500 3L12 5" stroke="#fff" strokeWidth="1.800" />
            <path d="M9 9h6v7H9z" fill="#ea8a5a" />
            <path d="M11 11h2v3h-2z" fill="#fff" />
          </Svg>
        </Tray>
        <Tray label="电源">
          <Svg>
            <path d="M5 5.500h9.500v7H5M4 3v3M1.500 3v3M0.500 6h4.500v2H0.500zM2.500 8v3h3" stroke="#fff" />
            <path d="M7 7h6v4H7zM15 7.500h1v3h-1z" fill="#fff" />
          </Svg>
        </Tray>
        <Tray label="网络">
          <Svg>
            <circle cx="13" cy="14" r="1.500" fill="#fff" />
            <path d="M8.500 15A5.500 5.500 0 0 1 14 9.500M5.500 15A8.500 8.500 0 0 1 14 6.500M2.500 15A11.500 11.500 0 0 1 14 3.500" stroke="#fff" />
          </Svg>
        </Tray>
        <Tray label="音量">
          <Svg>
            <path d="M0.500 6h3L8 2v12L3.500 10h-3z" stroke="#fff" />
            <path d="M10 6c1 1 1 3 0 4M12 4c2 2 2 6 0 8" stroke="#fff" />
            <path d="M14 2c2.500 3 2.500 9 0 12" stroke="#777" />
          </Svg>
        </Tray>
        <Tray label="中文输入">
          <span className="text-[13px] leading-none">中</span>
        </Tray>
        <Tray label="搜狗输入法" className="w-8">
          <SogouLogo className="size-[18px]" />
        </Tray>
        <Tray label="电脑温度" className="w-10">
          <span className="flex size-[22px] items-center justify-center rounded-full border-2 border-[#1fc46a] bg-[#0c2733] text-xs">
            24
          </span>
        </Tray>
        <Tray label="操作中心" className="w-10">
          <span className="relative">
            <Svg>
              <path d="M0 0h16v12H8l-4 4v-4H0z" fill="#fff" />
              <path d="M3 3.500h10M3 6.500h10M3 9.500h6" stroke="#020816" />
            </Svg>
            <span className="absolute top-1.5 left-2 flex size-4 items-center justify-center rounded-full border border-[#888] bg-[#2a2d33] text-[11px] font-bold">
              3
            </span>
          </span>
        </Tray>
        <span className="ml-1.5 w-px bg-[#555b66]" />
      </div>
    </div>
  );
}

export default function App() {
  return (
    <div className={clsx("flex h-screen flex-col overflow-hidden", UI_FONT)}>
      <TitleBar />
      <Ribbon />
      <TabBar />
      <main className="flex min-h-0 flex-1 bg-[#bfc2cb]">
        <div className="min-w-0 flex-1 overflow-hidden">
          <Page />
        </div>
        <ScrollBar />
        <div className="w-[7px] shrink-0 bg-[#dadcdc]">
          <button
            aria-label="展开任务窗格"
            className="mt-60 flex h-[99px] w-full items-center justify-center bg-[#3d79c6]"
          >
            <Caret className="rotate-90 text-white" />
          </button>
        </div>
      </main>
      <StatusBar />
      <TaskBar />
    </div>
  );
}
